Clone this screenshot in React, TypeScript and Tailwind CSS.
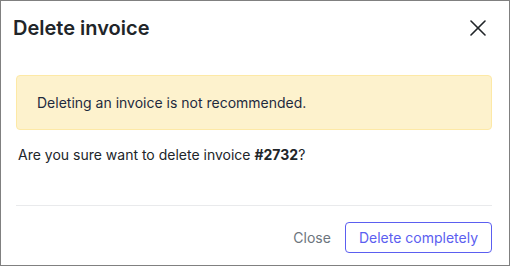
export default function App() {
  return (
    <div className="w-[511px] h-[267px] bg-white" style={{ fontFamily: 'Inter, "Noto Sans", sans-serif' }}>
      {/* Modal frame */}
      <div className="w-[510px] h-[266px] border border-[#808080] bg-white flex flex-col pl-[15px] pr-[17px]">
        {/* Header */}
        <div className="flex items-center justify-between pt-[14px] h-[39px]">
          <h2 className="text-[20px] leading-[24px] font-semibold text-[#212529] -ml-[3px]">Delete invoice</h2>
          <button className="shrink-0 w-[16px] h-[16px] mr-[6px] text-[#212529]">
            <svg width="16" height="16" viewBox="0 0 16 16" fill="none" stroke="currentColor" strokeWidth="1.6" strokeLinecap="round">
              <line x1="1" y1="1" x2="15" y2="15" />
              <line x1="15" y1="1" x2="1" y2="15" />
            </svg>
          </button>
        </div>

        {/* Warning alert */}
        <div className="mt-[35px] h-[55px] rounded-[4px] border border-[#fde9a6] bg-[#fdf2cd] flex items-center px-5">
          <p className="text-[14px] leading-5 text-[#1e2a3e]">Deleting an invoice is not recommended.</p>
        </div>

        {/* Confirmation text */}
        <p className="mt-[15px] ml-[2px] text-[14px] leading-5 text-[#212529]">
          Are you sure want to delete invoice <span className="font-bold">#2732</span>?
        </p>

        {/* Footer */}
        <div className="mt-[40px] border-t border-[#e9eaec]" />
        <div className="mt-[16px] flex items-center justify-end gap-[14px]">
          <button className="text-[14px] leading-5 text-[#6c757d]">Close</button>
          <button className="h-[31px] px-[13px] rounded-[4px] border border-[#5b5ef0] text-[14px] leading-5 text-[#5b5ef0]">
            Delete completely
          </button>
        </div>
      </div>
    </div>
  );
}
